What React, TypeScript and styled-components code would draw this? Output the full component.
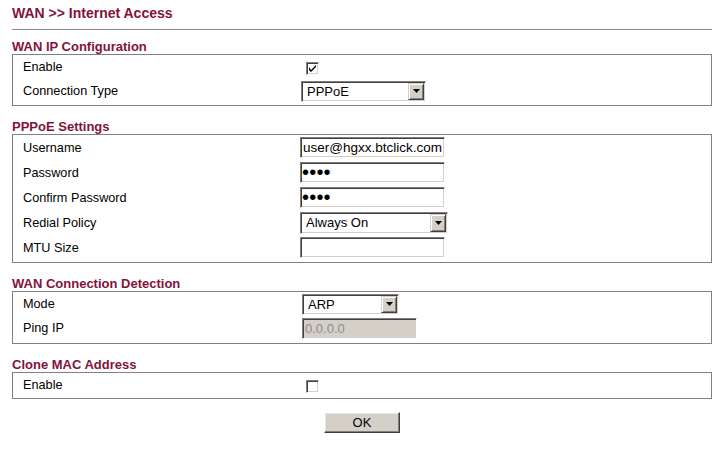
import React from "react";
import styled, { createGlobalStyle } from "styled-components";

const GlobalStyle = createGlobalStyle`
  html, body {
    margin: 0;
    padding: 0;
    background: #ffffff;
  }
  body {
    font-family: "Liberation Sans", Arial, sans-serif;
    color: #000000;
  }
`;

const MAROON = "#82123c";

const Page = styled.div`
  width: 700px;
  padding: 5px 12px 0 12px;
`;

const Title = styled.h1`
  margin: 0;
  font-size: 14px;
  line-height: 16px;
  font-weight: bold;
  color: ${MAROON};
`;

const Rule = styled.div`
  margin: 8px 0 10px 0;
  border-top: 1px solid #8a8a8a;
`;

const Section = styled.section`
  margin-bottom: 14px;
  &:last-of-type {
    margin-bottom: 13px;
  }
`;

const SectionTitle = styled.h2`
  margin: 0;
  font-size: 13px;
  line-height: 14px;
  font-weight: bold;
  color: ${MAROON};
`;

const Box = styled.div<{ $padBottom: number }>`
  border: 1px solid #808080;
  padding: 0 0 ${(p) => p.$padBottom}px 0;
`;

const Row = styled.div<{ $h: number }>`
  display: grid;
  grid-template-columns: 287px 1fr;
  align-items: center;
  height: ${(p) => p.$h}px;
`;

const Label = styled.div`
  padding-left: 10px;
  font-size: 12.7px;
  line-height: 14px;
`;

const Cell = styled.div<{ $offset?: number }>`
  display: flex;
  align-items: center;
  padding-left: ${(p) => p.$offset ?? 0}px;
`;

const sunken = `
  border-style: solid;
  border-width: 1px;
  border-color: #808080 #ffffff #ffffff #808080;
  box-shadow: inset 1px 1px 0 #404040, inset -1px -1px 0 #d4d0c8;
`;

const CheckBox = styled.span`
  box-sizing: border-box;
  display: inline-flex;
  align-items: center;
  justify-content: center;
  width: 13px;
  height: 13px;
  margin-top: 3px;
  background: #ffffff;
  ${sunken}
`;

const TextField = styled.input<{ $w: number }>`
  box-sizing: border-box;
  width: ${(p) => p.$w}px;
  height: 21px;
  margin: 0;
  padding: 0 0 0 2px;
  ${sunken}
  outline: none;
  background: #ffffff;
  font-family: "Liberation Sans", Arial, sans-serif;
  font-size: 13.5px;
  color: #000000;

  &[type="password"] {
    font-size: 20px;
    letter-spacing: 0.2px;
    padding-left: 1px;
  }

  &:disabled {
    background: #d4d0c8;
    color: #8c8c8c;
    font-size: 13px;
  }
`;

const Select = styled.div<{ $w: number; $h: number }>`
  box-sizing: border-box;
  display: flex;
  align-items: stretch;
  width: ${(p) => p.$w}px;
  height: ${(p) => p.$h}px;
  padding: 1px;
  background: #ffffff;
  ${sunken}
`;

const SelectText = styled.span`
  flex: 1;
  display: flex;
  align-items: center;
  padding-left: 4px;
  font-size: 13px;
  white-space: nowrap;
  overflow: hidden;
`;

const ArrowButton = styled.span`
  box-sizing: border-box;
  display: flex;
  align-items: center;
  justify-content: center;
  width: 16px;
  background: #d4d0c8;
  border-style: solid;
  border-width: 1px;
  border-color: #d4d0c8 #404040 #404040 #d4d0c8;
  box-shadow: inset 1px 1px 0 #ffffff, inset -1px -1px 0 #808080;
`;

const Actions = styled.div`
  display: flex;
  justify-content: center;
`;

const OkButton = styled.button`
  box-sizing: border-box;
  width: 76px;
  height: 21px;
  margin: 0;
  padding: 0;
  background: #d4d0c8;
  border-style: solid;
  border-width: 1px;
  border-color: #ffffff #404040 #404040 #ffffff;
  box-shadow: inset -1px -1px 0 #808080, inset 1px 1px 0 #e8e6e1;
  font-family: "Liberation Sans", Arial, sans-serif;
  font-size: 13px;
  color: #000000;
`;

const Check = ({ checked }: { checked?: boolean }) => (
  <CheckBox>
    {checked ? (
      <svg width="7" height="7" viewBox="0 0 7 7">
        <path d="M0 2 L0 5 L2 7 L7 2 L7 0 L2 5 Z" fill="#000" />
      </svg>
    ) : null}
  </CheckBox>
);

const Dropdown = ({ value, w, h = 21 }: { value: string; w: number; h?: number }) => (
  <Select $w={w} $h={h}>
    <SelectText>{value}</SelectText>
    <ArrowButton>
      <svg width="7" height="4" viewBox="0 0 7 4">
        <path d="M0 0 H7 L3.5 4 Z" fill="#000" />
      </svg>
    </ArrowButton>
  </Select>
);

const App = () => (
  <>
    <GlobalStyle />
    <Page>
      <Title>WAN &gt;&gt; Internet Access</Title>
      <Rule />

      <Section>
        <SectionTitle>WAN IP Configuration</SectionTitle>
        <Box $padBottom={2}>
          <Row $h={24}>
            <Label>Enable</Label>
            <Cell $offset={6}>
              <Check checked />
            </Cell>
          </Row>
          <Row $h={24}>
            <Label>Connection Type</Label>
            <Cell $offset={1}>
              <Dropdown value="PPPoE" w={125} />
            </Cell>
          </Row>
        </Box>
      </Section>

      <Section>
        <SectionTitle>PPPoE Settings</SectionTitle>
        <Box $padBottom={2}>
          <Row $h={25}>
            <Label>Username</Label>
            <Cell>
              <TextField $w={145} defaultValue="user@hgxx.btclick.com" />
            </Cell>
          </Row>
          <Row $h={25}>
            <Label>Password</Label>
            <Cell>
              <TextField $w={145} type="password" defaultValue="abcd" />
            </Cell>
          </Row>
          <Row $h={25}>
            <Label>Confirm Password</Label>
            <Cell>
              <TextField $w={145} type="password" defaultValue="abcd" />
            </Cell>
          </Row>
          <Row $h={25}>
            <Label>Redial Policy</Label>
            <Cell>
              <Dropdown value="Always On" w={148} h={22} />
            </Cell>
          </Row>
          <Row $h={25}>
            <Label>MTU Size</Label>
            <Cell>
              <TextField $w={145} defaultValue="" />
            </Cell>
          </Row>
        </Box>
      </Section>

      <Section>
        <SectionTitle>WAN Connection Detection</SectionTitle>
        <Box $padBottom={3}>
          <Row $h={24}>
            <Label>Mode</Label>
            <Cell $offset={2}>
              <Dropdown value="ARP" w={97} />
            </Cell>
          </Row>
          <Row $h={24}>
            <Label>Ping IP</Label>
            <Cell $offset={2}>
              <TextField $w={115} defaultValue="0.0.0.0" disabled />
            </Cell>
          </Row>
        </Box>
      </Section>

      <Section>
        <SectionTitle>Clone MAC Address</SectionTitle>
        <Box $padBottom={1}>
          <Row $h={24}>
            <Label>Enable</Label>
            <Cell $offset={6}>
              <Check />
            </Cell>
          </Row>
        </Box>
      </Section>

      <Actions>
        <OkButton type="button">OK</OkButton>
      </Actions>
    </Page>
  </>
);

export default App;
